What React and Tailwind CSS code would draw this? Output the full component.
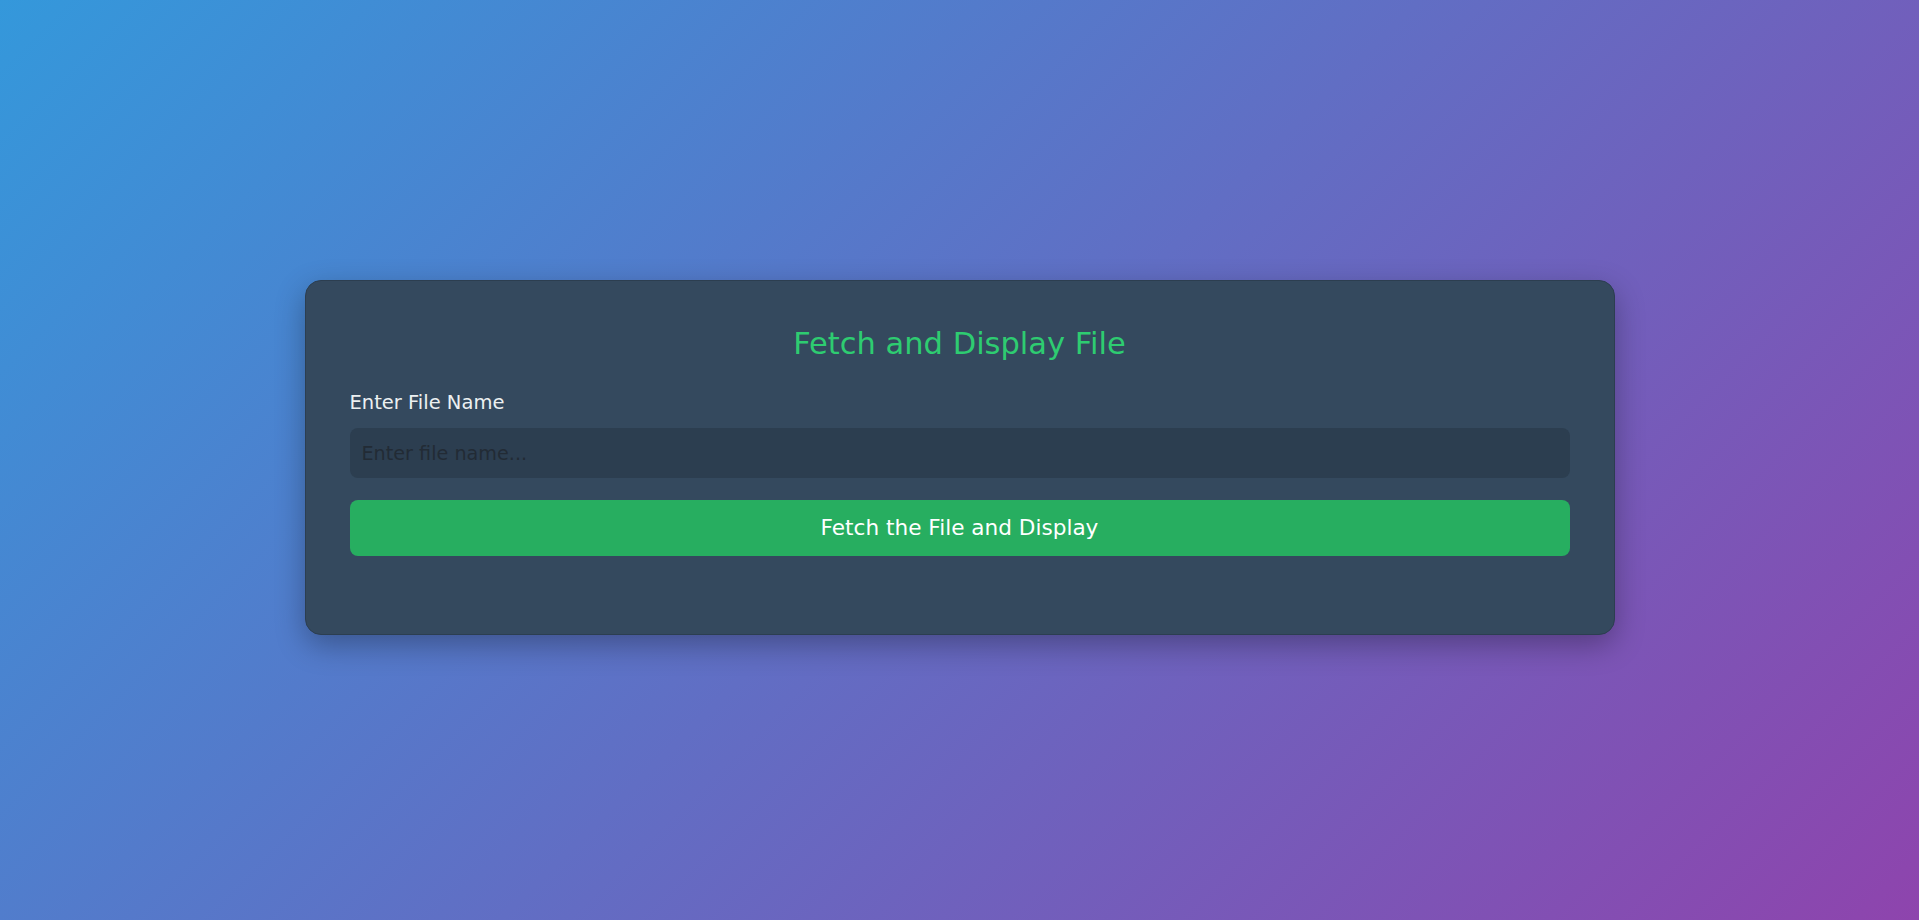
export default function App() {
  return (
    <div className="min-h-screen w-full flex items-center justify-center pb-[5px] bg-[linear-gradient(135deg,#3498db,#8e44ad)] font-['DejaVu_Sans',sans-serif]">
      <div className="w-[1310px] rounded-2xl border border-[#2c3e50] bg-[#34495e] p-[44px] shadow-[0_10px_30px_rgba(0,0,0,0.3)]">
        <h1 className="text-center text-[30.5px] leading-[37px] text-[#2ecc71] mb-[30px]">Fetch and Display File</h1>
        <label className="block text-[19.5px] leading-[22px] text-[#ecf0f1] mb-[14px]">Enter File Name</label>
        <input
          type="text"
          placeholder="Enter file name..."
          className="block w-full h-[50px] rounded-lg bg-[#2c3e50] px-3 text-[19.2px] text-[#ecf0f1] placeholder:text-[#222b35] outline-none"
        />
        <button className="mt-[22px] w-full h-[56px] rounded-lg bg-[#27ae60] text-[21.6px] text-white">
          Fetch the File and Display
        </button>
        <div className="h-[34px]" />
      </div>
    </div>
  );
}
